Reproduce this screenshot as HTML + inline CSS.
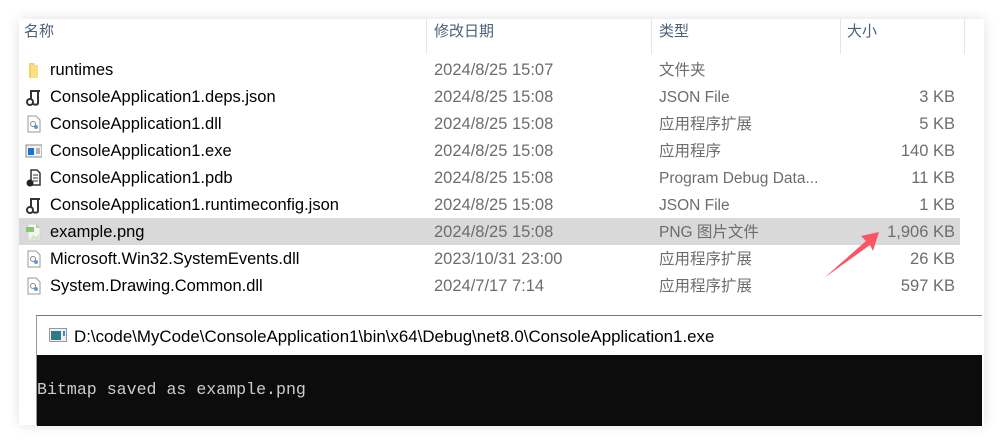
<!DOCTYPE html>
<html><head><meta charset="utf-8"><style>
*{margin:0;padding:0;box-sizing:border-box}
body{width:1001px;height:444px;background:#fff;position:relative;overflow:hidden;font-family:"Liberation Sans","Noto Sans CJK SC",sans-serif}
.panel{position:absolute;left:19px;top:19px;width:965px;height:406px;background:#fff;box-shadow:0 0 12px rgba(0,0,0,.12)}
.hd{position:absolute;top:0;height:35px;font-size:15px;color:#4c607a;line-height:26px}
.sep{position:absolute;top:0;width:1px;height:35px;background:#e5e5e5}
.row{position:absolute;left:0;width:941px;height:27px;font-size:16.5px;line-height:29px}
.row.sel{background:#d9d9d9}
.n{position:absolute;left:31px;color:#000;white-space:nowrap}
.d{position:absolute;left:415px;color:#6d6d6d}
.t{position:absolute;left:640px;color:#6d6d6d;font-size:15.5px}
.s{position:absolute;right:5px;color:#6d6d6d}
.ic{position:absolute;left:6px;top:5px;width:17px;height:18px}
.con{position:absolute;left:36px;top:315px;width:946px;height:110px;border-top:1px solid #777;border-left:1px solid #999;background:#fff}
.ct{position:absolute;left:37px;top:11px;font-size:16.9px;color:#000;white-space:nowrap}
.cb{position:absolute;left:0;top:39px;width:100%;height:71px;background:#0c0c0c}
.cbt{position:absolute;left:0;top:25px;font-family:"Liberation Mono",monospace;font-size:16.6px;color:#cccccc;white-space:pre}
</style></head><body>
<div class="panel">
<div class="hd" style="left:5px">名称</div>
<div class="sep" style="left:407px"></div>
<div class="hd" style="left:415px">修改日期</div>
<div class="sep" style="left:632px"></div>
<div class="hd" style="left:640px">类型</div>
<div class="sep" style="left:821px"></div>
<div class="hd" style="left:828px">大小</div>
<div class="sep" style="left:945px"></div>

<div class="row" style="top:37px"><svg class="ic" viewBox="0 0 17 18"><path d="M4 2h5l1 2v13H4z" fill="#f5cf6a"/><path d="M6 4h7v13H6z" fill="#fbdf86"/></svg><span class="n">runtimes</span><span class="d">2024/8/25 15:07</span><span class="t">文件夹</span></div>

<div class="row" style="top:64px"><svg class="ic" viewBox="0 0 17 18"><path d="M6 12V3h9M13 3v12c0 2-3 2-5 1" fill="none" stroke="#333" stroke-width="2"/><circle cx="5" cy="14" r="3" fill="none" stroke="#333" stroke-width="2"/></svg><span class="n">ConsoleApplication1.deps.json</span><span class="d">2024/8/25 15:08</span><span class="t">JSON File</span><span class="s">3 KB</span></div>

<div class="row" style="top:91px"><svg class="ic" viewBox="0 0 17 18"><path d="M3 1h8l4 4v12H3z" fill="#fff" stroke="#999"/><circle cx="8" cy="9" r="2.5" fill="none" stroke="#888"/><circle cx="11" cy="12" r="2" fill="#5a9ad8"/></svg><span class="n">ConsoleApplication1.dll</span><span class="d">2024/8/25 15:08</span><span class="t">应用程序扩展</span><span class="s">5 KB</span></div>

<div class="row" style="top:118px"><svg class="ic" viewBox="0 0 17 18"><rect x="1" y="3" width="16" height="12" fill="#f3f3f3" stroke="#888"/><rect x="3" y="6" width="6" height="7" fill="#1a73d8"/><path d="M11 7h4M11 9h4M11 11h4" stroke="#777"/></svg><span class="n">ConsoleApplication1.exe</span><span class="d">2024/8/25 15:08</span><span class="t">应用程序</span><span class="s">140 KB</span></div>

<div class="row" style="top:145px"><svg class="ic" viewBox="0 0 17 18"><path d="M6 1h6l3 3v12H6z" fill="#fff" stroke="#333" stroke-width="1.5"/><path d="M8 6h5M8 9h5M8 12h5" stroke="#333"/><circle cx="5" cy="14" r="3.5" fill="#222"/></svg><span class="n">ConsoleApplication1.pdb</span><span class="d">2024/8/25 15:08</span><span class="t">Program Debug Data...</span><span class="s">11 KB</span></div>

<div class="row" style="top:172px"><svg class="ic" viewBox="0 0 17 18"><path d="M6 12V3h9M13 3v12c0 2-3 2-5 1" fill="none" stroke="#333" stroke-width="2"/><circle cx="5" cy="14" r="3" fill="none" stroke="#333" stroke-width="2"/></svg><span class="n">ConsoleApplication1.runtimeconfig.json</span><span class="d">2024/8/25 15:08</span><span class="t">JSON File</span><span class="s">1 KB</span></div>

<div class="row sel" style="top:199px"><svg class="ic" viewBox="0 0 17 18"><path d="M3 1h8l4 4v12H3z" fill="#f4f4f4" stroke="#cfd9c8"/><path d="M11 1v4h4z" fill="#a9d596"/><rect x="1" y="4" width="8" height="5" fill="#8dc478"/><path d="M5 16l3-4 3 2 3-3v5z" fill="#cfe6c4"/></svg><span class="n">example.png</span><span class="d">2024/8/25 15:08</span><span class="t">PNG 图片文件</span><span class="s">1,906 KB</span></div>

<div class="row" style="top:226px"><svg class="ic" viewBox="0 0 17 18"><path d="M3 1h8l4 4v12H3z" fill="#fff" stroke="#999"/><circle cx="8" cy="9" r="2.5" fill="none" stroke="#888"/><circle cx="11" cy="12" r="2" fill="#5a9ad8"/></svg><span class="n">Microsoft.Win32.SystemEvents.dll</span><span class="d">2023/10/31 23:00</span><span class="t">应用程序扩展</span><span class="s">26 KB</span></div>

<div class="row" style="top:253px"><svg class="ic" viewBox="0 0 17 18"><path d="M3 1h8l4 4v12H3z" fill="#fff" stroke="#999"/><circle cx="8" cy="9" r="2.5" fill="none" stroke="#888"/><circle cx="11" cy="12" r="2" fill="#5a9ad8"/></svg><span class="n">System.Drawing.Common.dll</span><span class="d">2024/7/17 7:14</span><span class="t">应用程序扩展</span><span class="s">597 KB</span></div>
</div>

<svg style="position:absolute;left:0;top:0" width="1001" height="444"><path d="M879 232L861 236L866 241L824 278L870 245L873 251Z" fill="#fb5563"/></svg>

<div class="con">
<svg style="position:absolute;left:12px;top:12px" width="18" height="14" viewBox="0 0 18 14"><rect x="0.5" y="0.5" width="17" height="13" fill="#eee" stroke="#999"/><rect x="2" y="3" width="10" height="9" fill="#2f7a8a"/><rect x="14" y="3" width="2" height="5" fill="#3a8ad0"/></svg>
<div class="ct">D:\code\MyCode\ConsoleApplication1\bin\x64\Debug\net8.0\ConsoleApplication1.exe</div>
<div class="cb"><div class="cbt">Bitmap saved as example.png</div></div>
</div>
</body></html>
